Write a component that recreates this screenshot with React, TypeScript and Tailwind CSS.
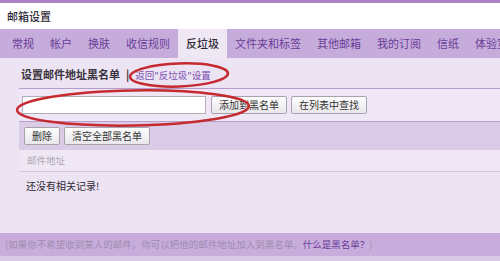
import React from "react";

const tabs = ["常规", "帐户", "换肤", "收信规则", "反垃圾", "文件夹和标签", "其他邮箱", "我的订阅", "信纸", "体验室"];

function Btn({ children, className = "" }: { children: React.ReactNode; className?: string }) {
  return (
    <button
      className={
        "h-[18px] px-[7px] rounded-[2px] border border-[#a8a2ad] bg-gradient-to-b from-[#fdfdfd] to-[#e9e7eb] text-[10px] leading-none text-[#333] " +
        className
      }
    >
      {children}
    </button>
  );
}

export default function App() {
  return (
    <div className="relative w-[500px] h-[261px] overflow-hidden bg-[#ece4f2] font-['Noto_Sans_CJK_SC','Noto_Sans',sans-serif]">
      {/* top strip */}
      <div className="h-[3px] bg-[#a983c6]" />

      {/* title */}
      <div className="h-[26px] bg-white flex items-center pl-[7px] text-[11px] font-medium text-[#2f2a35]">
        邮箱设置
      </div>

      {/* tabs */}
      <div className="h-[29px] bg-[#c6acdb] flex items-stretch pl-[4px]">
        {tabs.map((t) => (
          <div
            key={t}
            className={
              t === "反垃圾"
                ? "px-[8px] flex items-center text-[11px] whitespace-nowrap bg-[#efe8f4] text-[#2e2935] font-medium"
                : "px-[8px] flex items-center text-[11px] whitespace-nowrap text-[#6a3c98]"
            }
          >
            {t}
          </div>
        ))}
      </div>

      {/* content */}
      <div className="h-[175px] bg-[#ece4f2] pl-[19px]">
        <div className="h-[31px] flex items-end pb-[6px] pl-[2px] border-b border-[#b69ccb]">
          <span className="text-[11px] font-bold text-[#3a3340]">设置邮件地址黑名单</span>
          <span className="ml-[6px] text-[11px] font-bold text-[#3a3340]">|</span>
          <span className="ml-[6px] text-[9.5px] text-[#7b52b3]">返回"反垃圾"设置</span>
        </div>

        <div className="h-[33px] flex items-center gap-[4px] pl-[3px] bg-[#efe7f5] border-b border-[#b89ecc]">
          <input className="w-[184px] h-[18px] bg-white border border-[#b3adb8] outline-none" />
          <Btn className="ml-[1px]">添加到黑名单</Btn>
          <Btn>在列表中查找</Btn>
        </div>

        <div className="h-[28px] flex items-center gap-[4px] pl-[5px] bg-[#dccbe7]">
          <Btn>删除</Btn>
          <Btn>清空全部黑名单</Btn>
        </div>

        <div className="h-[22px] flex items-center pl-[8px] bg-[#efe8f4] border-b border-[#d4c6dd] text-[9.5px] text-[#b0a6b8]">
          邮件地址
        </div>

        <div className="pl-[7px] pt-[6px] text-[10px] text-[#2f2a35]">还没有相关记录!</div>
      </div>

      {/* footer */}
      <div className="h-[23px] bg-[#c8addc] flex items-center pl-[5px] text-[9.5px] text-[#a08cb0] whitespace-nowrap">
        (如果你不希望收到某人的邮件，你可以把他的邮件地址加入到黑名单。
        <span className="text-[#6a3c98]">什么是黑名单？</span>)
      </div>
      <div className="h-[6px] bg-[#d9c8e6]" />

      {/* red annotation ellipses */}
      <svg className="absolute left-0 top-0 pointer-events-none" width="500" height="261">
        <ellipse cx="179" cy="75" rx="49" ry="11.5" transform="rotate(-2 179 75)" fill="none" stroke="#c42a30" strokeWidth="2.5" />
        <ellipse cx="133" cy="108" rx="116" ry="17.5" transform="rotate(-1 133 108)" fill="none" stroke="#c42a30" strokeWidth="2.5" />
      </svg>
    </div>
  );
}
